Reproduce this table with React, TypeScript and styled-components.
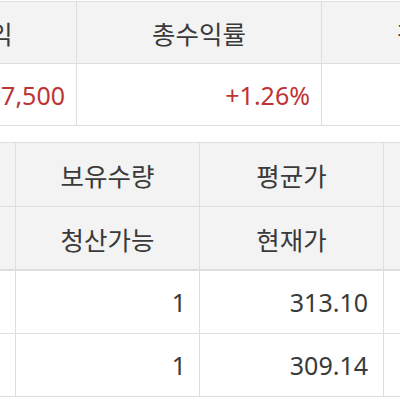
import React from "react";
import styled, { createGlobalStyle } from "styled-components";

const Global = createGlobalStyle`
  html, body { margin: 0; padding: 0; background: #ffffff; overflow: hidden; }
  body { font-family: "Noto Sans CJK KR", "Noto Sans", sans-serif; }
`;

const Page = styled.div`
  width: 400px;
  height: 400px;
  overflow: hidden;
  display: flex;
  flex-direction: column;
  gap: 16px;
  padding-top: 1px;
  box-sizing: border-box;
`;

const Table = styled.div<{ $cols: string; $shift: number }>`
  display: grid;
  grid-template-columns: ${(p) => p.$cols};
  margin-left: ${(p) => p.$shift}px;
  border-top: 1px solid #dedede;
  width: max-content;
`;

const Cell = styled.div<{ $head?: boolean; $num?: boolean; $pad?: number; $red?: boolean; $h?: number; $thick?: boolean }>`
  box-sizing: border-box;
  height: ${(p) => p.$h ?? 62}px;
  display: flex;
  align-items: center;
  justify-content: ${(p) => (p.$num ? "flex-end" : "center")};
  padding: 0 ${(p) => (p.$num ? p.$pad ?? 14 : 0)}px 0 0;
  background: ${(p) => (p.$head ? "#f3f3f3" : "#ffffff")};
  border-right: 1px solid #dedede;
  border-bottom: ${(p) => (p.$thick ? 2 : 1)}px solid #dedede;
  color: ${(p) => (p.$red ? "#bd3434" : "#3a3a3a")};
  font-size: ${(p) => (p.$num ? 25 : 25.5)}px;
  font-family: ${(p) =>
    p.$num
      ? `"Noto Sans", "Noto Sans CJK KR", sans-serif`
      : `"Noto Sans CJK KR", "Noto Sans", sans-serif`};
  white-space: nowrap;
  overflow: hidden;
`;

export default function App() {
  return (
    <>
      <Global />
      <Page>
        <Table $cols="245px 245px 245px" $shift={-168}>
          <Cell $head>총평가손익</Cell>
          <Cell $head>총수익률</Cell>
          <Cell $head>평가금액</Cell>
          <Cell $num $pad={11} $red>+387,500</Cell>
          <Cell $num $pad={11} $red>+1.26%</Cell>
          <Cell $num $pad={11}>31,087,500</Cell>
        </Table>
        <Table $cols="185px 184px 184px 184px" $shift={-169}>
          <Cell $head $h={64}>종목명</Cell>
          <Cell $head $h={64}>보유수량</Cell>
          <Cell $head $h={64}>평균가</Cell>
          <Cell $head $h={64}>평가손익</Cell>
          <Cell $head $h={64} $thick>종목코드</Cell>
          <Cell $head $h={64} $thick>청산가능</Cell>
          <Cell $head $h={64} $thick>현재가</Cell>
          <Cell $head $h={64} $thick>수익률</Cell>
          <Cell $h={63}>AAPL</Cell>
          <Cell $num $pad={13} $h={63}>1</Cell>
          <Cell $num $pad={15} $h={63}>313.10</Cell>
          <Cell $num $h={63}>0.00</Cell>
          <Cell $h={63}>MSFT</Cell>
          <Cell $num $pad={13} $h={63}>1</Cell>
          <Cell $num $pad={15} $h={63}>309.14</Cell>
          <Cell $num $h={63}>0.00</Cell>
        </Table>
      </Page>
    </>
  );
}
